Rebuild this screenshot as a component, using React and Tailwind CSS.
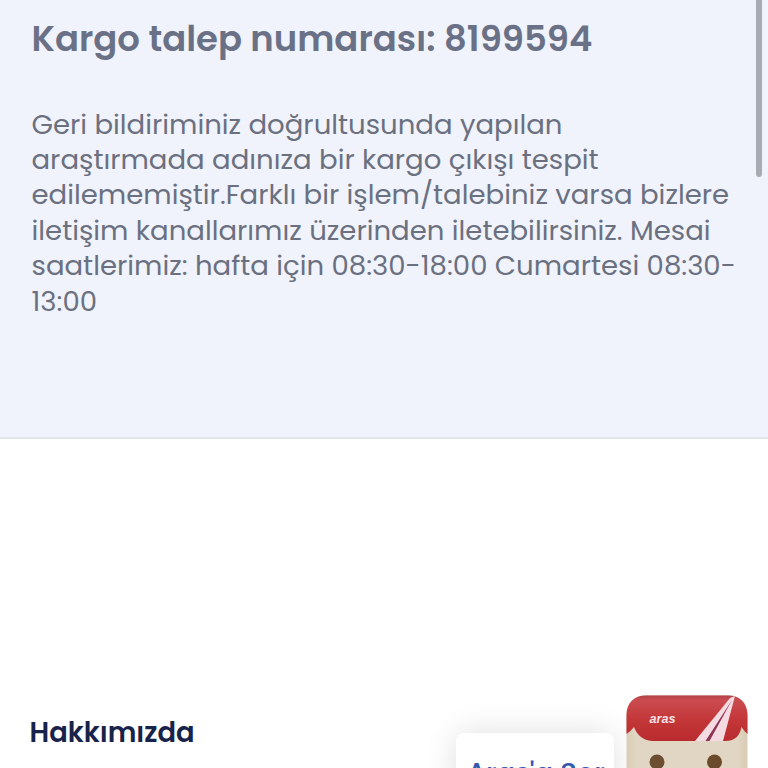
function Mascot() {
  return (
    <svg viewBox="0 0 122 122" className="size-[122px] shrink-0" role="img" aria-label="Asistan">
      <defs>
        <linearGradient id="cap" x1="0" y1="0" x2="0" y2="1">
          <stop offset="0" stopColor="#b04347" />
          <stop offset="0.1" stopColor="#ca4c50" />
          <stop offset="0.5" stopColor="#c4383a" />
          <stop offset="1" stopColor="#b92b2e" />
        </linearGradient>
        <linearGradient id="face" x1="0" y1="0" x2="1" y2="0">
          <stop offset="0" stopColor="#dacdb7" />
          <stop offset="0.08" stopColor="#e1d6c3" />
          <stop offset="0.92" stopColor="#e1d6c3" />
          <stop offset="1" stopColor="#d8cab3" />
        </linearGradient>
      </defs>
      <rect x="0.5" width="121" height="122" rx="20" fill="url(#face)" />
      <path
        d="M0.5 39V20C0.5 8 8 0.5 20 0.5H102C114 0.5 121.5 8 121.5 20V39Q118 36 115.5 32Q113 46 99 46H26Q13 45 8 32Q4 37 0.5 39Z"
        fill="url(#cap)"
      />
      <path d="M69 46L104 3L109 1L97 46Z" fill="#f4dbe1" />
      <path d="M79.5 46L106 5L83.5 46Z" fill="#8f3454" />
      <text
        x="23.5"
        y="28"
        textLength="26"
        lengthAdjust="spacingAndGlyphs"
        fill="#f7e2e2"
        fontFamily="Liberation Sans, sans-serif"
        fontSize="13"
        fontStyle="italic"
        fontWeight="700"
      >
        aras
      </text>
      <circle cx="31" cy="67" r="7.5" fill="#6c4e30" />
      <circle cx="88.5" cy="67" r="7.5" fill="#6c4a2c" />
    </svg>
  );
}

export default function App() {
  return (
    <div className="relative flex h-[768px] w-[768px] flex-col overflow-hidden bg-white font-['Poppins','Inter',sans-serif]">
      <section className="h-[439px] shrink-0 border-b-2 border-[#e3e4ea] bg-[#f0f3fc] pl-[31.5px] text-[#6b7080]">
        <h1 className="pt-[18px] text-[35.45px] leading-[42px] font-semibold whitespace-nowrap text-[#6a7186]">
          Kargo talep numarası: 8199594
        </h1>
        <p className="w-[720px] pt-[46.6px] text-[27.55px] leading-[35.4px]">
          Geri bildiriminiz doğrultusunda yapılan
          <br />
          araştırmada adınıza bir kargo çıkışı tespit edilememiştir.Farklı bir işlem/talebiniz varsa
          bizlere iletişim kanallarımız üzerinden iletebilirsiniz. Mesai saatlerimiz: hafta için
          08:30-18:00 Cumartesi 08:30-13:00
        </p>
      </section>

      <footer className="flex-1 pt-[276px] pl-[29.5px]">
        <h2 className="text-[27.4px] leading-9 font-semibold text-[#17234a]">Hakkımızda</h2>
      </footer>

      {/* scroll thumb */}
      <div className="absolute top-0 right-[6px] h-[177px] w-[6px] rounded-b-full bg-[#a8abb1]" />

      {/* floating assistant */}
      <div className="absolute top-[695px] left-[456px] flex items-start gap-3">
        <div className="mt-[38px] h-20 w-[158px] rounded-[8px] bg-white pt-[22px] pl-[11px] text-[27.4px] leading-9 font-medium whitespace-nowrap text-[#3558b0] shadow-[0_0_32px_rgba(0,0,0,0.13)]">
          Aras'a Sor
        </div>
        <Mascot />
      </div>
    </div>
  );
}
